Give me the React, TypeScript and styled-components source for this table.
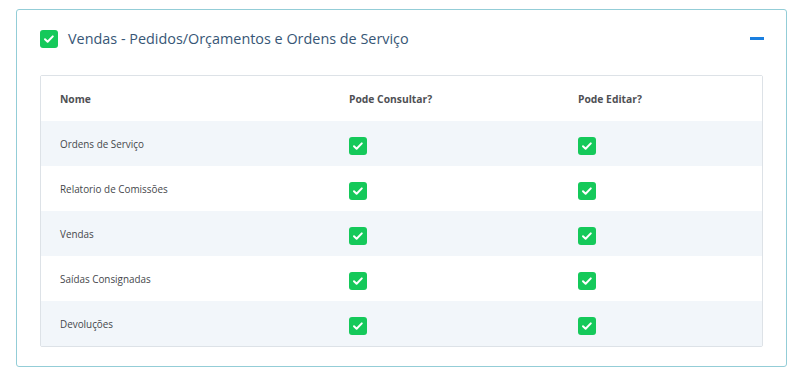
import React from 'react';
import styled, { createGlobalStyle } from 'styled-components';

const GlobalStyle = createGlobalStyle`
  html, body {
    margin: 0;
    padding: 0;
    background: #ffffff;
  }
  body {
    font-family: 'Open Sans', 'Liberation Sans', sans-serif;
  }
`;

const Page = styled.div`
  padding: 9px 12px 0 16px;
`;

const Card = styled.section`
  border: 1px solid #93cdd7;
  border-radius: 3px;
  padding: 0 23px 19px 23px;
  background: #fff;
`;

const CardHeader = styled.div`
  display: flex;
  align-items: center;
  height: 57px;
  margin-bottom: 8px;
`;

const Title = styled.h3`
  flex: 1;
  margin: 0 0 0 10px;
  font-size: 14.4px;
  font-weight: 400;
  color: #375676;
`;

const Collapse = styled.button`
  width: 14px;
  height: 3px;
  padding: 0;
  border: none;
  background: #1a7fe0;
  margin-right: -1px;
  cursor: pointer;
`;

const Table = styled.div`
  border: 1px solid #dde2e7;
  border-radius: 2px;
`;

const Row = styled.div<{ $striped?: boolean }>`
  display: grid;
  grid-template-columns: 289px 229px 1fr;
  align-items: center;
  height: 45px;
  background: ${({ $striped }) => ($striped ? '#f2f6fa' : '#ffffff')};
`;

const Cell = styled.div<{ $head?: boolean }>`
  padding-left: 19px;
  font-size: ${({ $head }) => ($head ? '10.3px' : '9.9px')};
  font-weight: ${({ $head }) => ($head ? 700 : 400)};
  color: ${({ $head }) => ($head ? '#4f5054' : '#45474b')};
  display: flex;
  align-items: center;
`;

const CheckCell = styled(Cell)`
  padding-top: 4px;
`;

const CheckBox = ({ size = 18 }: { size?: number }) => (
  <svg width={size} height={size} viewBox="0 0 18 18">
    <rect x="0" y="0" width="18" height="18" rx="3" fill="#15c95a" />
    <path
      d="M5 9.3 L7.6 11.8 L12.8 6.4"
      fill="none"
      stroke="#ffffff"
      strokeWidth="2"
      strokeLinecap="round"
      strokeLinejoin="round"
    />
  </svg>
);

const items = [
  'Ordens de Serviço',
  'Relatorio de Comissões',
  'Vendas',
  'Saídas Consignadas',
  'Devoluções',
];

export default function App() {
  return (
    <>
      <GlobalStyle />
      <Page>
        <Card>
          <CardHeader>
            <CheckBox />
            <Title>Vendas - Pedidos/Orçamentos e Ordens de Serviço</Title>
            <Collapse aria-label="Recolher" />
          </CardHeader>
          <Table>
            <Row>
              <Cell $head>Nome</Cell>
              <Cell $head>Pode Consultar?</Cell>
              <Cell $head>Pode Editar?</Cell>
            </Row>
            {items.map((name, i) => (
              <Row key={name} $striped={i % 2 === 0}>
                <Cell>{name}</Cell>
                <CheckCell>
                  <CheckBox />
                </CheckCell>
                <CheckCell>
                  <CheckBox />
                </CheckCell>
              </Row>
            ))}
          </Table>
        </Card>
      </Page>
    </>
  );
}
